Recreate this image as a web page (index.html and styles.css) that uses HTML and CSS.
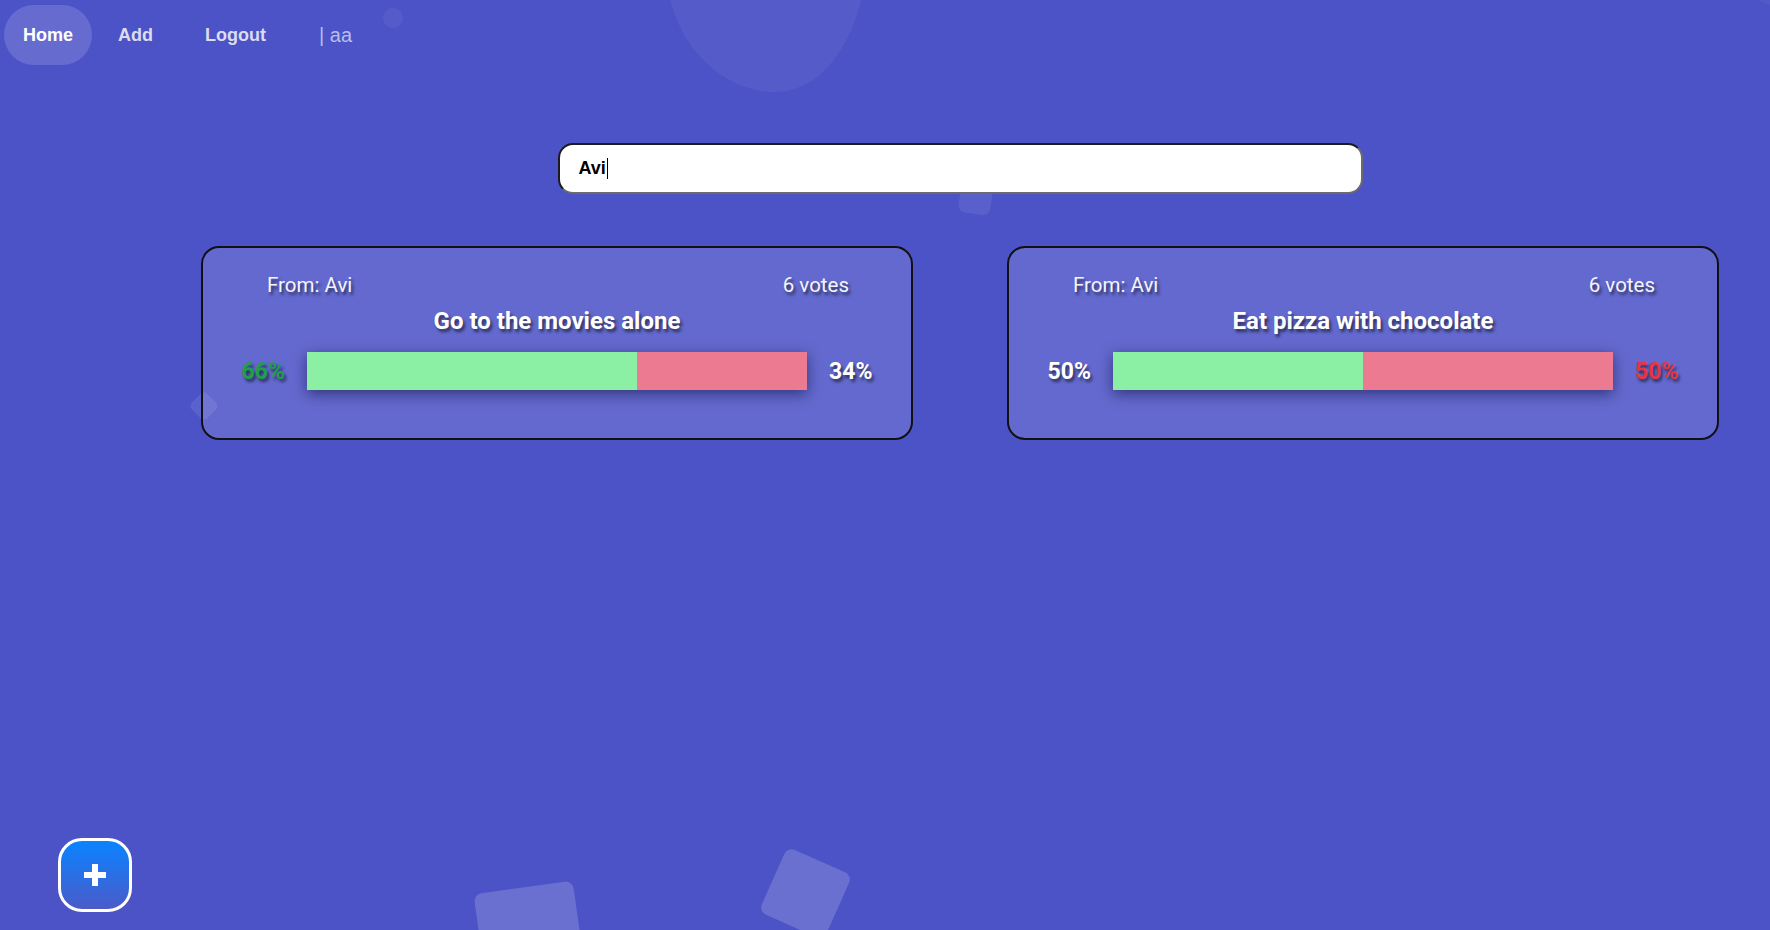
FILE: index.html
```html
<!DOCTYPE html>
<html>
<head>
<meta charset="utf-8">
<link rel="stylesheet" href="styles.css">
</head>
<body>
<div class="decor">
  <div class="blob"></div>
  <div class="dot"></div>
  <div class="arc"></div>
  <div class="chip"></div>
  <div class="diamond"></div>
  <div class="sq sq1"></div>
  <div class="sq sq2"></div>
</div>
<nav class="nav">
  <a class="nav-link active">Home</a>
  <a class="nav-link">Add</a>
  <a class="nav-link">Logout</a>
  <span class="nav-user">| aa</span>
</nav>
<main class="main">
  <div class="search-wrap">
    <div class="search"><span class="search-text">Avi</span><span class="caret"></span></div>
  </div>
  <section class="cards">
    <article class="card">
      <div class="card-head"><span>From: Avi</span><span>6 votes</span></div>
      <h2 class="card-title">Go to the movies alone</h2>
      <div class="bar-row">
        <span class="pct pct-left win">66%</span>
        <div class="bar"><div class="bar-yes" style="width:66%"></div><div class="bar-no"></div></div>
        <span class="pct pct-right">34%</span>
      </div>
    </article>
    <article class="card">
      <div class="card-head"><span>From: Avi</span><span>6 votes</span></div>
      <h2 class="card-title">Eat pizza with chocolate</h2>
      <div class="bar-row">
        <span class="pct pct-left">50%</span>
        <div class="bar"><div class="bar-yes" style="width:50%"></div><div class="bar-no"></div></div>
        <span class="pct pct-right lose">50%</span>
      </div>
    </article>
  </section>
</main>
<button class="fab" aria-label="Add">
  <svg width="22" height="22" viewBox="0 0 22 22"><rect x="8" y="0" width="6" height="22" fill="#fff"/><rect x="0" y="8" width="22" height="6" fill="#fff"/></svg>
</button>
</body>
</html>
```

FILE: styles.css
```css
html, body {
  margin: 0;
  padding: 0;
  height: 100%;
  overflow: hidden;
}
body {
  background: #4c53c7;
  font-family: "Liberation Sans", Arial, sans-serif;
  position: relative;
}
.decor {
  position: absolute;
  inset: 0;
  overflow: hidden;
  z-index: 0;
  pointer-events: none;
}
.blob {
  position: absolute;
  left: 666px;
  top: -120px;
  width: 200px;
  height: 212px;
  background: rgba(255,255,255,0.05);
  border-radius: 30% 62% 45% 55% / 40% 35% 65% 60%;
}
.dot {
  position: absolute;
  left: 383px;
  top: 8px;
  width: 20px;
  height: 20px;
  border-radius: 50%;
  background: rgba(255,255,255,0.05);
}
.arc {
  position: absolute;
  left: 1660px;
  top: -300px;
  width: 340px;
  height: 315px;
  border-radius: 50%;
  background: rgba(255,255,255,0.04);
}
.chip {
  position: absolute;
  left: 960px;
  top: 178px;
  width: 32px;
  height: 36px;
  border-radius: 7px;
  transform: rotate(8deg);
  background: rgba(255,255,255,0.08);
}
.diamond {
  position: absolute;
  left: 193px;
  top: 395px;
  width: 22px;
  height: 22px;
  border-radius: 5px;
  transform: rotate(45deg);
  background: rgba(255,255,255,0.09);
}
.sq {
  position: absolute;
  border-radius: 8px;
  background: rgba(255,255,255,0.17);
}
.sq1 {
  left: 480px;
  top: 887px;
  width: 100px;
  height: 100px;
  transform: rotate(-8deg);
}
.sq2 {
  left: 770px;
  top: 858px;
  width: 71px;
  height: 71px;
  transform: rotate(24deg);
}
.nav {
  position: relative;
  z-index: 1;
  display: flex;
  align-items: center;
  padding: 5px 0 0 4px;
  height: 60px;
}
.nav-link {
  display: block;
  height: 60px;
  line-height: 60px;
  padding: 0 19px;
  border-radius: 30px;
  font-size: 18px;
  font-weight: bold;
  color: #dcdcf0;
  margin-right: 7px;
}
.nav-link.active {
  background: rgba(255,255,255,0.15);
  color: #ffffff;
}
.nav-link + .nav-link + .nav-link {
  margin-left: 7px;
}
.nav-user {
  margin-left: 27px;
  font-size: 20px;
  color: #b9bde9;
  line-height: 60px;
}
.main {
  position: relative;
  z-index: 1;
  padding: 0 51px 0 201px;
}
.search-wrap {
  display: flex;
  justify-content: center;
  padding-top: 78px;
}
.search {
  box-sizing: border-box;
  width: 805px;
  height: 51px;
  background: #fff;
  border-radius: 15px;
  border-style: solid;
  border-width: 2px;
  border-color: #1c1c1c #6b6b6b #6b6b6b #1c1c1c;
  display: flex;
  align-items: center;
  padding-left: 19px;
}
.search-text {
  font-size: 18px;
  font-weight: bold;
  color: #000;
}
.caret {
  display: inline-block;
  width: 1px;
  height: 21px;
  background: #000;
  margin-left: 1px;
}
.cards {
  display: grid;
  grid-template-columns: 1fr 1fr;
  column-gap: 94px;
  margin-top: 52px;
}
.card {
  box-sizing: border-box;
  height: 194px;
  border: 2px solid #111;
  border-radius: 18px;
  background: rgba(255,255,255,0.13);
  padding: 22px 38px 0 38px;
  color: #fff;
  font-family: Roboto, "Noto Sans", sans-serif;
  text-shadow: 2px 3px 3px rgba(0,0,0,0.55);
}
.card-head {
  display: flex;
  justify-content: space-between;
  padding: 0 24px 0 26px;
  font-size: 20.5px;
  line-height: 30px;
  color: #f4f4ff;
}
.card-title {
  margin: 6px 0 0 0;
  text-align: center;
  font-size: 24px;
  line-height: 30px;
  font-weight: bold;
}
.bar-row {
  display: grid;
  grid-template-columns: 44px 1fr 44px;
  column-gap: 22px;
  align-items: center;
  margin-top: 16px;
  height: 38px;
}
.pct {
  font-size: 23px;
  font-weight: bold;
  color: #fff;
  white-space: nowrap;
}
.pct-left { text-align: right; }
.pct-right { text-align: left; }
.pct.win { color: #1f9e4b; }
.pct.lose { color: #e8343f; }
.bar {
  display: flex;
  height: 38px;
  box-shadow: 0 4px 14px rgba(20,20,70,0.6);
}
.bar-yes {
  background: #8befa4;
  height: 100%;
}
.bar-no {
  flex: 1;
  background: #ec7a91;
  height: 100%;
}
.fab {
  position: fixed;
  left: 58px;
  bottom: 18px;
  z-index: 2;
  width: 74px;
  height: 74px;
  box-sizing: border-box;
  border: 3px solid #fff;
  border-radius: 24px;
  background: linear-gradient(180deg, #0a84ff 0%, #2a6fe6 50%, #4b5bc8 100%);
  display: flex;
  align-items: center;
  justify-content: center;
  padding: 0;
}
```
